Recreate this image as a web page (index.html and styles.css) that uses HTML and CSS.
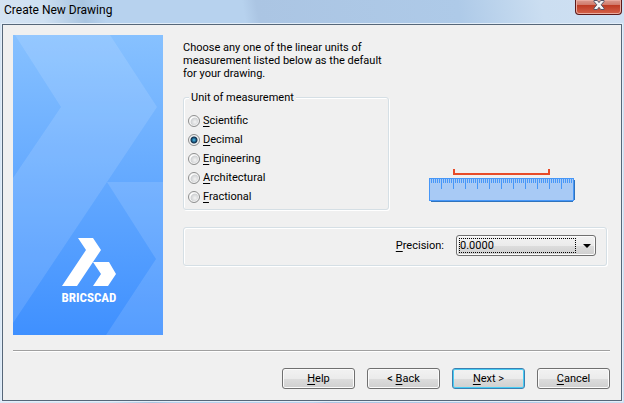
FILE: index.html
```html
<!DOCTYPE html>
<html lang="en">
<head>
    <meta charset="UTF-8">
    <meta name="viewport" content="width=device-width, initial-scale=1.0">
    <title>Create New Drawing</title>
    <link rel="stylesheet" href="styles.css">
</head>
<body>
    <div class="window">
        <header class="titlebar">
            <h1 class="title">Create New Drawing</h1>
            <button class="close" type="button" aria-label="Close">
                <svg width="12" height="10" viewBox="0 0 12 10">
                    <path d="M1 .5h3.3L6 2.6 7.700 .5H11v1L8.200 4.800 11 8.200v1.300H7.700L6 7.300 4.300 9.500H1V8.200l2.800-3.400L1 1.500z" fill="#f4f4f4" stroke="#545468"/>
                </svg>
            </button>
        </header>

        <form class="dialog">
            <div class="content">
                <svg class="banner" width="150" height="300" viewBox="0 0 150 300">
                    <defs>
                        <linearGradient id="sky" x1="0" y1="0" x2="0" y2="1">
                            <stop offset="0" stop-color="#87c1ff"/>
                            <stop offset="1" stop-color="#3f90ff"/>
                        </linearGradient>
                    </defs>
                    <rect width="150" height="300" fill="url(#sky)"/>
                    <path class="band" d="M2 0H97L144 72 94 147 0 288V143L48 72z"/>
                    <path class="band" d="M94 147H150V300H93L143 224z"/>
                    <path class="mark" d="M65 203H80L88 215 80 227 64 251H49L73 215z"/>
                    <path class="mark" d="M80 227H96L103 239 95 251H80L88 239z"/>
                    <text class="brand" x="76" y="267" text-anchor="middle">BRICSCAD</text>
                </svg>

                <div class="options">
                    <p class="intro">Choose any one of the linear units of measurement listed below as the default for your drawing.</p>

                    <div class="units-row">
                        <fieldset class="group units">
                            <legend>Unit of measurement</legend>
                            <label class="unit"><input type="radio" name="unit"><span><u>S</u>cientific</span></label>
                            <label class="unit"><input type="radio" name="unit" checked><span><u>D</u>ecimal</span></label>
                            <label class="unit"><input type="radio" name="unit"><span><u>E</u>ngineering</span></label>
                            <label class="unit"><input type="radio" name="unit"><span><u>A</u>rchitectural</span></label>
                            <label class="unit"><input type="radio" name="unit"><span><u>F</u>ractional</span></label>
                        </fieldset>

                        <svg class="ruler" width="146" height="34" viewBox="0 0 146 34">
                            <defs>
                                <pattern id="ticks" x="2" width="2" height="4" patternUnits="userSpaceOnUse">
                                    <rect width="1" height="4" fill="#4797f8"/>
                                </pattern>
                            </defs>
                            <path d="M25 0v5h95V0" fill="none" stroke="#e84b28" stroke-width="2"/>
                            <path d="M2 11H146V31H144V33H2z" fill="#2f73bd"/>
                            <rect x="0" y="9" width="145" height="23" fill="#4797f8"/>
                            <rect x="1" y="10" width="143" height="21" fill="#a8caf5"/>
                            <rect x="2" y="10" width="142" height="4" fill="url(#ticks)"/>
                            <path d="M12.500 10v10M24.500 10v10M36.500 10v10M48.500 10v10M60.500 10v10M72.500 10v10M84.500 10v10M96.500 10v10M108.500 10v10M120.500 10v10M132.500 10v10" stroke="#4797f8"/>
                        </svg>
                    </div>

                    <div class="group precision">
                        <label for="precision"><u>P</u>recision:</label>
                        <div class="combo">
                            <select id="precision">
                                <option>0.0000</option>
                            </select>
                        </div>
                    </div>
                </div>
            </div>

            <footer class="buttons">
                <button type="button"><span><u>H</u>elp</span></button>
                <button type="button"><span>&lt; <u>B</u>ack</span></button>
                <button type="button" class="default"><span><u>N</u>ext &gt;</span></button>
                <button type="button"><span><u>C</u>ancel</span></button>
            </footer>
        </form>
    </div>
</body>
</html>
```
FILE: styles.css
```css
* {
    box-sizing: border-box;
}

body {
    margin: 0;
    font: 11px/13px Roboto, "Liberation Sans", sans-serif;
    color: #000;
}

.window {
    display: flex;
    flex-direction: column;
    min-height: 100vh;
    padding: 0 2px 2px;
    background: linear-gradient(80deg, #dce9f6 0, #cfe0f1 16%, #a9c5e1 22%, #b7d2ee 25%, #b7d2ee 45%, #abc5e3 47%, #aecae8 76%, #cbdef1 88%, #cfe0f2 100%);
}

.titlebar {
    display: flex;
    justify-content: space-between;
    align-items: flex-start;
    height: 24px;
}

.title {
    margin: 0;
    padding: 1px 2px;
    font-weight: normal;
    font-size: 12px;
    line-height: 18px;
}

.close {
    display: flex;
    justify-content: center;
    width: 47px;
    height: 15px;
    padding: 0;
    border: 1px solid #5c1a1a;
    border-top: 0;
    border-radius: 0 0 4px 4px;
    background: linear-gradient(#dc9c90 0, #d07868 5px, #bd3a22 5px, #d4624a 100%);
    box-shadow: inset 0 0 0 1px #e9aca0;
}

.dialog {
    display: flex;
    flex-direction: column;
    flex: 1;
    padding: 10px 11px 11px 10px;
    border: 1px solid #566779;
    background: #f0f0f0;
    box-shadow: 0 0 0 1px #e3eef9;
}

.content {
    display: flex;
    gap: 20px;
    flex: 1;
    padding-bottom: 15px;
    border-bottom: 1px solid #a0a0a0;
    box-shadow: 0 1px 0 #fff;
}

.banner {
    flex: none;
}

.band {
    fill: #fff;
    fill-opacity: 0.12;
}

.mark {
    fill: #fff;
}

.brand {
    fill: #fff;
    font: bold 13px "Roboto Condensed", Roboto, sans-serif;
}

.options {
    flex: 1;
    padding: 6px 3px 0 0;
}

.intro {
    max-width: 206px;
    margin: 0 0 11px;
}

.group {
    margin: 0;
    border: 1px solid #d5dfe5;
    border-radius: 3px;
    box-shadow: 1px 1px 0 #fff, inset 1px 1px 0 #fff;
}

.units-row {
    display: flex;
    align-items: flex-end;
    gap: 40px;
    margin-bottom: 17px;
}

.units {
    width: 206px;
    padding: 7px 4px 3px;
}

.units legend {
    margin-left: 1px;
    padding: 0 2px;
    background: #f0f0f0;
}

.unit {
    display: flex;
    align-items: center;
    gap: 3px;
    height: 19px;
}

.unit input {
    appearance: none;
    width: 12px;
    height: 12px;
    margin: 0;
    border: 1px solid #8e8f8f;
    border-radius: 50%;
    background: radial-gradient(circle at 60% 60%, #f4f4f4 0, #cfd1d3 4px, #fff 5px);
    box-shadow: inset 0 0 0 1px #f6f6f6;
}

.unit input:checked {
    background: radial-gradient(circle at 50% 50%, #4fc0ea 0, #1b5c86 2px, #15304a 3px, #e4e8ea 4px);
}

u {
    text-underline-offset: 2px;
    text-decoration-thickness: 1px;
}

.ruler {
    flex: none;
    margin-bottom: 7px;
}

.precision {
    display: flex;
    justify-content: flex-end;
    align-items: center;
    gap: 12px;
    padding: 7px 10px 9px;
}

.combo {
    position: relative;
    width: 140px;
}

.combo select {
    appearance: none;
    display: block;
    width: 100%;
    height: 21px;
    padding: 0 3px;
    border: 1px solid #707070;
    border-radius: 3px;
    background: linear-gradient(#f2f2f2 0, #ebebeb 50%, #dddddd 50%, #cfcfcf 100%);
    box-shadow: inset 0 0 0 1px #fbfbfb;
    font: inherit;
    color: #000;
}

/* focus rectangle */
.combo::before {
    content: "";
    position: absolute;
    inset: 3px 20px 3px 3px;
    border: 1px dotted #000;
    pointer-events: none;
}

/* drop-down arrow */
.combo::after {
    content: "";
    position: absolute;
    top: 9px;
    right: 5px;
    border: 4px solid transparent;
    border-top-color: #000;
    border-bottom: 0;
    pointer-events: none;
}

.buttons {
    display: flex;
    justify-content: flex-end;
    gap: 12px;
    padding-top: 17px;
}

.buttons button {
    width: 73px;
    height: 21px;
    padding: 0;
    border: 1px solid #707070;
    border-radius: 3px;
    background: linear-gradient(#f2f2f2 0, #ebebeb 50%, #dddddd 50%, #cfcfcf 100%);
    box-shadow: inset 0 0 0 1px #fbfbfb;
    font: inherit;
    color: #000;
}

.buttons .default {
    border-color: #3c7fb1;
    box-shadow: inset 0 0 0 1px #48cdf4;
}
```
